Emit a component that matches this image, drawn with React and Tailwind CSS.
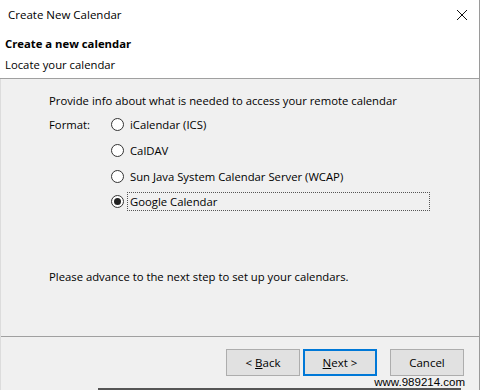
const Radio = ({ checked, label, focused }) => (
  <div className="flex items-center h-[25.7px]">
    <span className="w-[13px] h-[13px] rounded-full border border-[#333333] bg-white flex items-center justify-center shrink-0">
      {checked && <span className="w-[7px] h-[7px] rounded-full bg-[#222222]" />}
    </span>
    <span
      className={
        focused
          ? 'ml-[3px] w-[303px] h-[19px] border border-dotted border-[#555555] pl-[2px] leading-[17px]'
          : 'ml-[6px] leading-[17px]'
      }
    >
      {label}
    </span>
  </div>
);

const Button = ({ children, primary, className = '' }) => (
  <button
    className={`h-[27px] w-[74px] text-[11.5px] text-black bg-[#e1e1e1] ${
      primary ? 'border-2 border-[#0078d7] w-[72px]' : 'border border-[#adadad]'
    } ${className}`}
  >
    {children}
  </button>
);

export default function App() {
  return (
    <div
      className="w-[480px] h-[390px] bg-white flex flex-col text-[11.3px] text-black overflow-hidden"
      style={{ fontFamily: '"Open Sans", "Noto Sans", sans-serif' }}
    >
      <div className="flex border-r border-[#9a9a9a] flex-col h-[390px]">
        {/* title bar */}
        <div className="h-[30px] flex items-center justify-between pl-[8px] pr-[10px]">
          <span className="text-[11.5px]">Create New Calendar</span>
          <svg width="12" height="12" viewBox="0 0 12 12" className="mr-[1px]">
            <path d="M1 1 L11 11 M11 1 L1 11" stroke="#111" strokeWidth="1" />
          </svg>
        </div>
        {/* header */}
        <div className="h-[49px] pl-[5px] pt-[5px] border-b border-[#a0a0a0]">
          <div className="font-bold leading-[18px]">Create a new calendar</div>
          <div className="leading-[18px] mt-[3px]">Locate your calendar</div>
        </div>
        {/* body */}
        <div className="flex-1 bg-[#f0f0f0] border-l border-[#dcdcdc] flex flex-col">
          <div className="h-[258px] pl-[48px] pt-[13px] border-b border-[#a0a0a0]">
            <div className="leading-[17px]">Provide info about what is needed to access your remote calendar</div>
            <div className="flex mt-[3px]">
              <div className="w-[62px] pt-[4px] leading-[17px]">Format:</div>
              <div className="flex flex-col">
                <Radio label="iCalendar (ICS)" />
                <Radio label="CalDAV" />
                <Radio label="Sun Java System Calendar Server (WCAP)" />
                <Radio label="Google Calendar" checked focused />
              </div>
            </div>
            <div className="mt-[53px] leading-[17px]">Please advance to the next step to set up your calendars.</div>
          </div>
          <div className="flex-1 flex flex-col">
            <div className="flex justify-end pr-[15px] pt-[12px]">
              <Button>
                &lt; <span className="underline">B</span>ack
              </Button>
              <Button primary className="ml-[3px]">
                <span className="underline">N</span>ext &gt;
              </Button>
              <Button className="ml-[13px]">Cancel</Button>
            </div>
            <div className="flex justify-end pr-[14px]">
              <span
                className="text-[11.5px] leading-[12px] text-black"
                style={{ fontFamily: '"Liberation Sans", sans-serif' }}
              >
                www.989214.com
              </span>
            </div>
            <div className="ml-[97px] mr-[18px] mt-auto h-[2px] bg-[#555555]" />
          </div>
        </div>
      </div>
    </div>
  );
}
